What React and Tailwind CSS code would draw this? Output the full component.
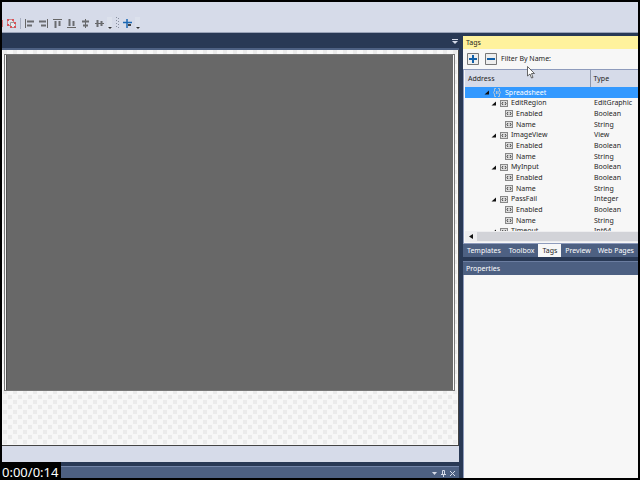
import React from "react";

const rows = [
  { name: "Spreadsheet", type: "", level: 0 },
  { name: "EditRegion", type: "EditGraphic", level: 1 },
  { name: "Enabled", type: "Boolean", level: 2 },
  { name: "Name", type: "String", level: 2 },
  { name: "ImageView", type: "View", level: 1 },
  { name: "Enabled", type: "Boolean", level: 2 },
  { name: "Name", type: "String", level: 2 },
  { name: "MyInput", type: "Boolean", level: 1 },
  { name: "Enabled", type: "Boolean", level: 2 },
  { name: "Name", type: "String", level: 2 },
  { name: "PassFail", type: "Integer", level: 1 },
  { name: "Enabled", type: "Boolean", level: 2 },
  { name: "Name", type: "String", level: 2 },
  { name: "Timeout", type: "Int64", level: 1 },
];

const indents = ["pl-[19px]", "pl-[26px]", "pl-[40px]"];

const tools = [
  { label: "Align left", thin: "M.5 0V9", bars: "M2 1.5H9V3.500H2ZM2 5.500H7V7.500H2Z" },
  { label: "Align right", thin: "M8.5 0V9", bars: "M0 1.5H7V3.500H0ZM2 5.500H7V7.500H2Z" },
  { label: "Align top", thin: "M0 .5H9", bars: "M1.5 2H3.500V9H1.5ZM5.500 2H7.500V7H5.500Z" },
  { label: "Align bottom", thin: "M0 8.5H9", bars: "M1.5 0H3.500V7H1.5ZM5.500 2H7.500V7H5.500Z" },
  { label: "Align middle", thin: "M4.5 0V9", bars: "M1 1.5H8V3.500H1ZM2 5.500H7V7.500H2Z" },
  { label: "Align center", thin: "M0 4.5H9", bars: "M1.5 1H3.500V8H1.5ZM5.500 2H7.500V7H5.500Z" },
];

function Caret() {
  return (
    <svg className="size-[5px] shrink-0" viewBox="0 0 5 5" aria-hidden="true">
      <path d="M5 .5V4.500H.5Z" fill="#111" />
    </svg>
  );
}

function TagIcon() {
  return (
    <svg className="h-[7px] w-[8px] shrink-0" viewBox="0 0 8 7" aria-hidden="true">
      <rect x=".5" y=".5" width="7" height="6" fill="#ddd" stroke="#888" />
      <path d="M3 2L2 3.5L3 5M5 2L6 3.5L5 5" fill="none" stroke="#444" />
    </svg>
  );
}

function RootIcon() {
  return (
    <svg className="h-[9px] w-[8px] shrink-0" viewBox="0 0 8 9" aria-hidden="true">
      <path d="M3 .5H1.500V3L.5 4.5L1.500 6V8.5H3M5 .5H6.500V3L7.500 4.5L6.500 6V8.5H5M3.500 3V6M5 3V6" fill="none" stroke="#b4c4d4" />
    </svg>
  );
}

function Drop() {
  return (
    <button aria-label="Toolbar options" className="flex h-3 w-[5px] items-end justify-center bg-[#dce1ec]">
      <svg className="h-[2px] w-[4px]" viewBox="0 0 4 2"><path d="M0 0H4L2 2Z" fill="#333" /></svg>
    </button>
  );
}

function Toolbar() {
  return (
    <header className="flex h-[31px] shrink-0 items-end border-b border-[#9aa3b8] bg-[#d6dbe9] pb-[3px]">
      <div className="flex h-3 items-center">
        <span className="mr-[4px] h-[7px] w-px bg-[#d98084]" />
        <button aria-label="Ungroup" className="mr-[4px]">
          <svg className="size-[9px]" viewBox="0 0 9 9">
            <path d="M.5 .5H6.5V6.5H.5Z" fill="#e3e3ea" stroke="#c9878c" />
            <path d="M3.500 3.500H8.5V8.5H3.500Z" fill="#e8e8ee" stroke="#999" />
            <path d="M0 0H2V2H0ZM5 0H7V2H5ZM0 5H2V7H0ZM7 3H9V5H7ZM3 7H5V9H3ZM7 7H9V9H7Z" fill="#dc5258" />
          </svg>
        </button>
        <span className="mr-[4px] h-[11px] w-px bg-[#aab1c3]" />
        <div className="flex gap-[5px]">
          {tools.map((t) => (
            <button key={t.label} aria-label={t.label}>
              <svg className="size-[9px]" viewBox="0 0 9 9">
                <path d={t.thin} stroke="#666" />
                <path d={t.bars} fill="#6a6c70" />
              </svg>
            </button>
          ))}
        </div>
        <span className="w-[3px]" />
        <Drop />
        <svg className="mx-[4px] h-3 w-[3px]" viewBox="0 0 3 12" aria-hidden="true">
          <path d="M.5 0V12M2.5 1V12" stroke="#888f9f" strokeDasharray="1 2" />
        </svg>
        <button aria-label="Insert" className="mr-[3px]">
          <svg className="size-[9px]" viewBox="0 0 9 9">
            <path d="M0 3.500H9M4 0V9" stroke="#1b67b3" strokeWidth="1.5" />
            <path d="M5 5H8V7H5Z" fill="#444" />
          </svg>
        </button>
        <Drop />
      </div>
    </header>
  );
}

function Editor() {
  return (
    <main className="flex min-w-0 flex-1 flex-col">
      <div className="flex h-[15px] shrink-0 items-center justify-end pr-px pt-[2px]">
        <button aria-label="Open documents">
          <svg className="block h-[6px] w-[6px]" viewBox="0 0 6 6"><path d="M0 .5H6" stroke="#d6dbe9" /><path d="M0 2H6L3 5Z" fill="#d6dbe9" /></svg>
        </button>
      </div>
      <div className="h-[2px] shrink-0 bg-[#4d6082]" />
      <div className="flex min-h-0 flex-1 flex-col border-b border-r border-[#444] bg-[#f7f7f7] bg-[conic-gradient(from_270deg_at_4px_4px,#ebebeb_90deg,transparent_0),conic-gradient(from_270deg_at_4px_4px,#ebebeb_90deg,transparent_0)] bg-[length:10px_10px] bg-[position:1px_0px,6px_5px] pb-[54px] pl-[2px] pr-[3px] pt-[4px]">
        <div className="flex flex-1 border border-[#777] bg-[#f7f7f7] px-px">
          <div className="flex-1 border-l border-[#4d4d4d] bg-[#686868]" />
        </div>
      </div>
      <div className="h-[16px] shrink-0 bg-[#d6dbe9]" />
      <div className="h-[4px] shrink-0" />
      <div className="flex h-[12px] shrink-0 items-center justify-end gap-[4px] border-t border-[#7385a8] bg-[#4d6082] pr-[4px] pt-[2px]">
        <button aria-label="Window position"><svg className="block size-[5px]" viewBox="0 0 5 5"><path d="M0 1H5L2.5 4Z" fill="#d6dbe9" /></svg></button>
        <button aria-label="Pin"><svg className="block h-[7px] w-[5px]" viewBox="0 0 5 7"><path d="M1.5 4V.5H3.5V4M0 4.5H5M2.5 4V7" fill="none" stroke="#d6dbe9" /></svg></button>
        <button aria-label="Close"><svg className="block size-[5px]" viewBox="0 0 5 5"><path d="M0 0L5 5M5 0L0 5" stroke="#d6dbe9" /></svg></button>
      </div>
    </main>
  );
}

function TagTable() {
  return (
    <div className="h-[161px] shrink-0 overflow-hidden">
      <table className="w-full table-fixed border-collapse text-left text-[7px] leading-[10px] text-[#1e1e1e]">
        <colgroup><col className="w-[125px]" /><col /></colgroup>
        <thead>
          <tr className="h-[17px] bg-[#d6dbe9]">
            <th className="border-r border-[#8f98ac] p-0 pl-[3px] font-normal">Address</th>
            <th className="p-0 pl-[3px] font-normal">Type</th>
          </tr>
        </thead>
        <tbody>
          {rows.map((r, i) => (
            <tr key={i} className={i === 0 ? "h-[11px] bg-[#3399ff] text-white" : i % 3 === 1 ? "h-[10px]" : "h-[11px]"}>
              <td className="p-0">
                <div className={"flex items-center " + indents[r.level]}>
                  {r.level < 2 && <Caret />}
                  <span className={r.level < 2 ? "w-[4px]" : "w-0"} />
                  {r.level === 0 ? <RootIcon /> : <TagIcon />}
                  <span className={r.level === 0 ? "pl-[4px]" : "pl-[3px]"}>{r.name}</span>
                </div>
              </td>
              <td className="p-0 pl-[4px]">{r.type}</td>
            </tr>
          ))}
        </tbody>
      </table>
    </div>
  );
}

function SidePanel() {
  return (
    <aside className="flex w-[175px] shrink-0 flex-col pt-[3px]">
      <h2 className="h-[13px] shrink-0 bg-[#fff29d] pl-[3px] text-[7px] leading-[14px] text-[#1e1e1e]">Tags</h2>
      <div className="flex h-[20px] shrink-0 items-center bg-[#f7f7f7] pl-[4px] text-[7px] text-[#1e1e1e]">
        <button aria-label="Expand all" className="mr-[6px]"><svg className="block size-[12px]" viewBox="0 0 12 12"><path d="M.5 .5H11.5V11.5H.5Z" fill="#eee" stroke="#777" /><path d="M2 6H10M6 2V10" stroke="#1260a8" strokeWidth="2" /></svg></button>
        <button aria-label="Collapse all" className="mr-[4px]"><svg className="block size-[12px]" viewBox="0 0 12 12"><path d="M.5 .5H11.5V11.5H.5Z" fill="#eee" stroke="#777" /><path d="M2 6H10" stroke="#1260a8" strokeWidth="2" /></svg></button>
        <span>Filter By Name:</span>
      </div>
      <div className="border-l border-t border-[#8e9bbc] bg-[#f7f7f7] pb-px pl-px">
        <TagTable />
        <div className="flex h-[11px] items-center bg-[#eeeef0] pl-[4px]">
          <button aria-label="Scroll left"><svg className="block h-[5px] w-[4px]" viewBox="0 0 4 5"><path d="M4 0V5L0 2.5Z" fill="#111" /></svg></button>
          <span className="ml-[4px] h-[9px] flex-1 bg-[#d2d3d8]" />
        </div>
      </div>
      <nav className="flex h-[14px] shrink-0 items-stretch justify-between border-t border-[#8e9bbc] bg-[#4d6082] pr-px text-[7px] leading-[13px] text-white">
        <button className="px-[4px]">Templates</button>
        <button className="px-[3px]">Toolbox</button>
        <button className="bg-[#f7f7f7] px-[4px] text-[#1e1e1e]">Tags</button>
        <button className="px-[3px]">Preview</button>
        <button className="px-[3px]">Web Pages</button>
      </nav>
      <div className="h-[4px] shrink-0" />
      <h2 className="h-[14px] shrink-0 border-t border-[#6b7da0] bg-[#4d6082] pl-[3px] text-[7px] leading-[14px] text-white">Properties</h2>
      <div className="min-h-0 flex-1 border-l border-[#8e9bbc] bg-[#f7f7f7]" />
    </aside>
  );
}

export default function App() {
  return (
    <div className="relative flex h-screen flex-col overflow-hidden border-2 border-black bg-[#293955] font-['Noto_Sans','Open_Sans',sans-serif]">
      <Toolbar />
      <div className="flex min-h-0 flex-1 gap-[4px]">
        <Editor />
        <SidePanel />
      </div>
      <svg className="absolute left-[525px] top-[64px] h-[13px] w-[8px]" viewBox="0 0 8 13" aria-hidden="true">
        <path d="M.5 .5V10L3 8L4.500 12L6 11.500L4.500 7.500H7.500Z" fill="#fff" stroke="#444" strokeWidth=".8" />
      </svg>
      <time className="absolute -bottom-[2px] -left-[2px] h-[18px] bg-black pl-[2px] pr-[3px] text-[13px] leading-[20px] text-white">0:00/0:14</time>
    </div>
  );
}
